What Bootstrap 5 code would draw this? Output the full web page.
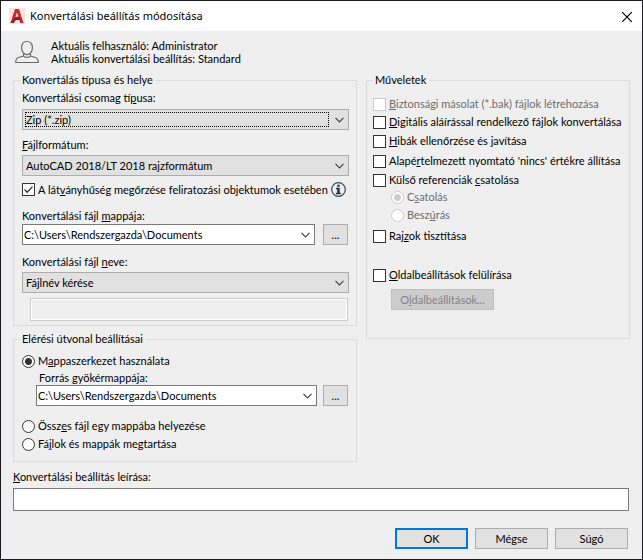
<!DOCTYPE html>
<html lang="hu">
<head>
<meta charset="utf-8">
<meta name="viewport" content="width=device-width, initial-scale=1">
<title>Konvertálási beállítás módosítása</title>
<link href="https://cdn.jsdelivr.net/npm/bootstrap@5.3.0/dist/css/bootstrap.min.css" rel="stylesheet">
<style>
  body { font: 11px/14px "Lato", "Liberation Sans", sans-serif; color: #000; background: #efefef; }
  .dialog { border: 1px solid #1b1a20; }
  .titlebar { height: 30px; background: #fff; font: 11px/16px "Noto Sans", "Open Sans", sans-serif; padding-left: 8px; gap: 5px; }
  .close-btn { width: 30px; height: 30px; padding: 0; border: 0; background: none; line-height: 1; }
  .userline { line-height: 13px; padding: 8px 14px; gap: 12px; }
  .content { padding: 0 13px 10px 12px; }
  .panels { display: grid; grid-template-columns: minmax(0, 344fr) minmax(0, 264fr); column-gap: 9px; align-items: start; margin-right: -1px; }
  fieldset.panel { border: 1px solid #dcdcdc; padding: 0 7px 4px 8px; }
  fieldset.panel legend { float: none; width: auto; margin: 0 0 0 -2px; padding: 0 3px 0 2px; font-size: inherit; line-height: 14px; }
  fieldset.panel-path { margin-top: 6px; padding-bottom: 10px; }
  fieldset.panel-ops { padding: 0 6px 28px; }
  fieldset.panel-ops legend { margin-left: 0; }
  .cap { display: block; }
  .t1 { margin-top: 1px; } .t3 { margin-top: 3px; } .t4 { margin-top: 4px; } .t5 { margin-top: 5px; }
  .t6 { margin-top: 6px; } .t7 { margin-top: 7px; } .t8 { margin-top: 8px; } .t10 { margin-top: 10px; }
  .t12 { margin-top: 12px; } .t13 { margin-top: 13px; } .t17 { margin-top: 17px; } .t25 { margin-top: 25px; }
  .drop { display: block; width: 100%; height: 21px; appearance: none; border: 1px solid #adadad; border-radius: 0; color: #000;
    font: inherit; padding: 0 20px 0 3px; outline: 0;
    background: #e1e1e1 url("data:image/svg+xml,%3Csvg xmlns='http://www.w3.org/2000/svg' width='9' height='6'%3E%3Cpath d='M.5.8l4 4 4-4' fill='none' stroke='%23444' stroke-width='1.2'/%3E%3C/svg%3E") no-repeat right 4px center; }
  .drop-edit { background-color: #fff; border-color: #7a7a7a; padding-left: 1px; }
  .focusbox { position: relative; }
  .focusbox::after { content: ""; position: absolute; inset: 3px 20px 3px 3px; border: 1px dotted #000; pointer-events: none; }
  .field { display: block; width: 100%; height: 23px; border: 1px solid #7a7a7a; border-radius: 0; background: #fff; padding: 0 4px; font: inherit; }
  .field:disabled { border-color: #ccc; background: #efefef; box-shadow: inset 0 0 0 1px #fff; }
  .push { height: 21px; padding: 0; border: 1px solid #adadad; border-radius: 0; background: #e1e1e1; color: #000; font: inherit; }
  .push.btn:disabled { background: #ccc; border-color: #bfbfbf; color: #838383; opacity: 1; }
  .push-default { border: 2px solid #0078d7; }
  .push-browse { width: 25px; flex: none; }
  .push-wide { width: 103px; }
  .push-foot { width: 73px; }
  .opt { display: flex; align-items: center; height: 14px; gap: 3px; white-space: nowrap; }
  .opt input { appearance: none; flex: none; width: 13px; height: 13px; margin: 0; border: 1px solid #333; background: #fff; }
  .opt input[type=radio] { border-radius: 50%; }
  .opt input[type=radio]:checked { background: radial-gradient(circle, #333 0 3px, #fff 4px); }
  .opt input[type=checkbox]:checked { background: #fff url("data:image/svg+xml,%3Csvg xmlns='http://www.w3.org/2000/svg' width='11' height='11'%3E%3Cpath d='M1.5 5.5l2.7 2.7 5.3-5.6' fill='none' stroke='%23333' stroke-width='1.3'/%3E%3C/svg%3E") center no-repeat; }
  .opt input:disabled { border-color: #ccc; }
  .opt input[type=radio]:disabled:checked { background: radial-gradient(circle, #ccc 0 3px, #fff 4px); }
  .opt input:disabled + label { color: #6d6d6d; }
  .in1 { padding-left: 14px; } .in2 { padding-left: 17px; } .in3 { padding-left: 18px; } .in4 { padding-left: 8px; }
  .side { padding-right: 1px; }
  .browse-row { gap: 6px; }
  .foot-row { gap: 7px; }
</style>
<script src="https://cdn.jsdelivr.net/npm/bootstrap@5.3.0/dist/js/bootstrap.bundle.min.js"></script>
</head>
<body>
<main class="dialog">
  <header class="titlebar d-flex align-items-center">
    <svg width="16" height="16" viewBox="0 0 16 16" aria-hidden="true"><path fill="#fbe3dd" d="M0 0h16v16H0z"/><path fill="#c32b30" d="M1.500 15L6 1h4l4.500 14h-3.300l-1-3.500H7.500L5 14.500z"/><path fill="#8d1a20" d="M1.500 15l4-4.500 4.500-1.500 1.500 3H6L4.800 15z"/><path fill="#fbe3dd" d="M7.900 4.500L6.500 9l3-.8z"/></svg>
    <span class="me-auto text-nowrap">Konvertálási beállítás módosítása</span>
    <button type="button" class="close-btn" aria-label="Bezárás"><svg width="10" height="10" viewBox="0 0 10 10"><path d="M0 0l10 10M10 0L0 10" stroke="#000" stroke-width="1.200"/></svg></button>
  </header>
  <div class="userline d-flex align-items-center">
    <svg class="flex-shrink-0" width="24" height="24" viewBox="0 0 24 24" fill="none" stroke="#6b6b6b" stroke-width="1.200" aria-hidden="true"><path d="M12 1.500c3.400 0 5.400 2.600 5.400 6.200 0 3.900-2.400 7-5.400 7s-5.400-3.100-5.400-7c0-3.600 2-6.200 5.400-6.200z"/><path d="M8.500 13.700v2.300l-5 1.500C1.500 18.200.7 19.500.7 22.500h22.600c0-3-.8-4.300-2.800-5l-5-1.500v-2.300M8.500 16c1 1.700 6 1.700 7 0"/></svg>
    <div>
      <div>Aktuális felhasználó: Administrator</div>
      <div>Aktuális konvertálási beállítás: Standard</div>
    </div>
  </div>
  <form class="content">
    <div class="panels">
      <div>
        <fieldset class="panel">
          <legend>Konvertálás típusa és helye</legend>
          <label class="cap t4" for="package">Konvertálási csomag tí<u>p</u>usa:</label>
          <div class="focusbox t4"><select class="drop" id="package"><option>Zip (*.zip)</option></select></div>
          <label class="cap t8" for="format"><u>F</u>ájlformátum:</label>
          <select class="drop t3" id="format"><option>AutoCAD 2018/LT 2018 rajzformátum</option></select>
          <div class="d-flex align-items-center justify-content-between t6">
            <div class="opt"><input type="checkbox" id="fidelity" checked><label for="fidelity">A lát<u>v</u>ányhűség megőrzése feliratozási objektumok esetében</label></div>
            <svg class="flex-shrink-0 my-n1" width="18" height="15" viewBox="0 0 18 15" aria-label="Információ"><circle cx="7.500" cy="7.500" r="6.800" fill="#e9f0f5" stroke="#3f4650" stroke-width="1.200"/><path fill="#2d333b" d="M6.200 2.700h2.500v2H6.200zM5 5.800h3.700v5h1.200v1.400H5v-1.400h1.200V7.200H5z"/></svg>
          </div>
          <label class="cap t12" for="folder">Konvertálási fájl <u>m</u>appája:</label>
          <div class="d-flex gap-2 side t1">
            <select class="drop drop-edit" id="folder"><option>C:\Users\Rendszergazda\Documents</option></select>
            <button type="button" class="btn push push-browse">...</button>
          </div>
          <label class="cap t10" for="filename">Konvertálási fájl <u>n</u>eve:</label>
          <select class="drop t3" id="filename"><option>Fájlnév kérése</option></select>
          <div class="in4 side t5"><input class="field" type="text" aria-label="Fájlnév" disabled></div>
        </fieldset>
        <fieldset class="panel panel-path">
          <legend>Elérési útvonal beállításai</legend>
          <div class="opt t8"><input type="radio" name="path" id="keep" checked><label for="keep">M<u>a</u>ppaszerkezet használata</label></div>
          <label class="cap in2 t3" for="root">Forrás <u>g</u>yökérmappája:</label>
          <div class="d-flex browse-row in1 side">
            <select class="drop drop-edit" id="root"><option>C:\Users\Rendszergazda\Documents</option></select>
            <button type="button" class="btn push push-browse">...</button>
          </div>
          <div class="opt t13"><input type="radio" name="path" id="single"><label for="single">Össz<u>e</u>s fájl egy mappába helyezése</label></div>
          <div class="opt t4"><input type="radio" name="path" id="retain"><label for="retain">Fá<u>j</u>lok és mappák megtartása</label></div>
        </fieldset>
      </div>
      <fieldset class="panel panel-ops">
        <legend>Műveletek</legend>
        <div class="opt t10"><input type="checkbox" id="bak" disabled><label for="bak"><u>B</u>iztonsági másolat (*.bak) fájlok létrehozása</label></div>
        <div class="opt t4"><input type="checkbox" id="signed"><label for="signed"><u>D</u>igitális aláírással rendelkező fájlok konvertálása</label></div>
        <div class="opt t5"><input type="checkbox" id="audit"><label for="audit"><u>H</u>ibák ellenőrzése és javítása</label></div>
        <div class="opt t6"><input type="checkbox" id="plotter"><label for="plotter">Alapé<u>r</u>telmezett nyomtató 'nincs' értékre állítása</label></div>
        <div class="opt t5"><input type="checkbox" id="bind"><label for="bind">Külső referenciák <u>c</u>satolása</label></div>
        <div class="opt in3 t3"><input type="radio" name="bindtype" id="b1" checked disabled><label for="b1">C<u>s</u>atolás</label></div>
        <div class="opt in3 t4"><input type="radio" name="bindtype" id="b2" disabled><label for="b2">Besz<u>ú</u>rás</label></div>
        <div class="opt t7"><input type="checkbox" id="purge"><label for="purge">Raj<u>z</u>ok tisztítása</label></div>
        <div class="opt t25"><input type="checkbox" id="override"><label for="override"><u>O</u>ldalbeállítások felülírása</label></div>
        <div class="in3 t7"><button type="button" class="btn push push-wide d-block" disabled>O<u>l</u>dalbeállítások...</button></div>
      </fieldset>
    </div>
    <label class="cap t8" for="descr"><u>K</u>onvertálási beállítás leírása:</label>
    <input class="field t4" type="text" id="descr">
    <div class="d-flex justify-content-end foot-row side t17">
      <button type="button" class="btn push push-default push-foot">OK</button>
      <button type="button" class="btn push push-foot">Mégse</button>
      <button type="button" class="btn push push-foot">Súgó</button>
    </div>
  </form>
</main>
</body>
</html>
